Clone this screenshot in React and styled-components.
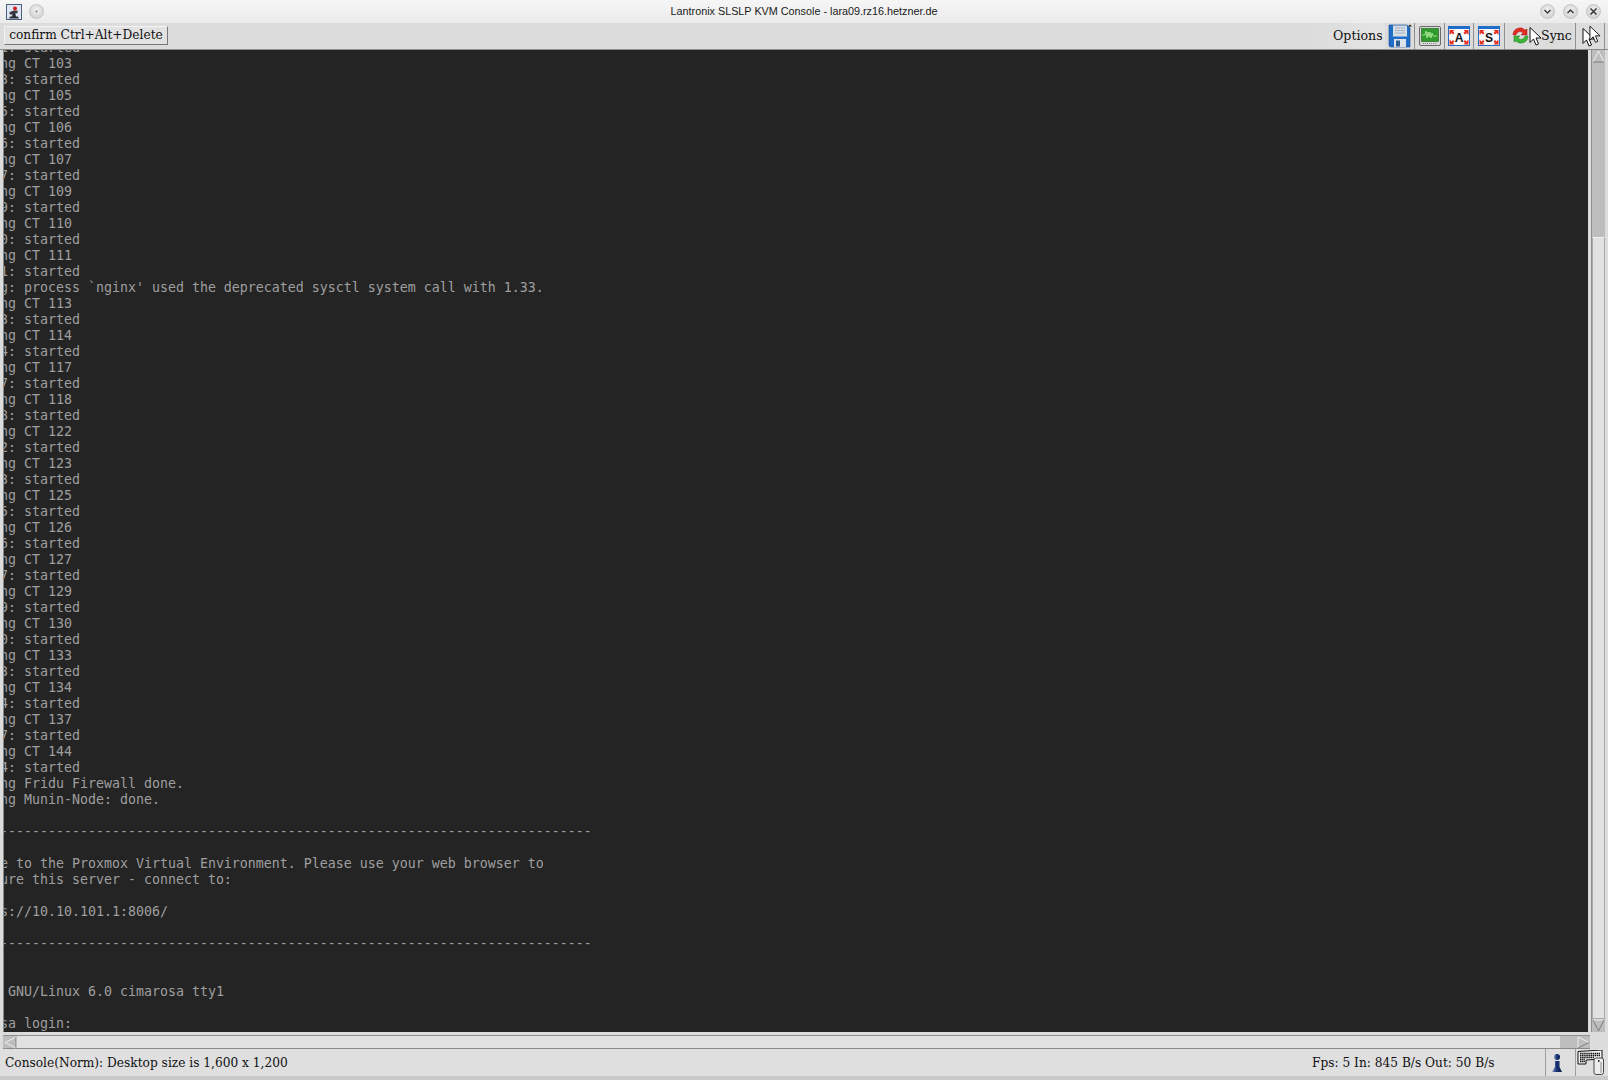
import React from 'react';
import styled, { createGlobalStyle } from 'styled-components';

const Global = createGlobalStyle`
  html, body { margin: 0; padding: 0; height: 1080px; overflow: hidden; background: #dcdcdc; }
  * { box-sizing: border-box; }
  svg { flex: none; display: block; }
`;

const Frame = styled.div`
  position: relative;
  width: 1608px;
  height: 1080px;
  overflow: hidden;
  display: flex;
  flex-direction: column;
  background: #dcdcdc;
`;

const TitleBar = styled.div`
  height: 23px;
  display: flex;
  align-items: center;
  padding: 0 7px 0 6px;
  background: linear-gradient(#f6f6f6, #ebebeb);
`;

const AppIcon = styled.div`
  width: 16px;
  height: 16px;
  margin-right: 7px;
  display: flex;
`;

const WinTitle = styled.div`
  flex: 1;
  text-align: center;
  padding-left: 24px;
  padding-bottom: 1px;
  font: 10.8px "Liberation Sans", Arial, sans-serif;
  color: #1a1a1a;
`;

const WinButtons = styled.div`
  display: flex;
  gap: 8px;
`;

const RoundBtn = styled.div`
  width: 15px;
  height: 15px;
  border-radius: 50%;
  background: radial-gradient(circle at 50% 40%, #f2f2f2, #c9c9c9);
  border: 1px solid #c4c4c4;
  display: flex;
  align-items: center;
  justify-content: center;
`;

const Toolbar = styled.div`
  height: 27px;
  display: flex;
  align-items: stretch;
  justify-content: space-between;
  padding: 0 3px 0 0;
  border-bottom: 1px solid #8a8a8a;
  background: #dcdcdc;
`;

const ConfirmButton = styled.button`
  margin: 3px 0 4px 4px;
  width: 164px;
  padding: 0 0 2px;
  white-space: nowrap;
  font: 12.2px "DejaVu Serif", serif;
  color: #111;
  background: #e2e2e2;
  border: 1px solid;
  border-color: #f4f4f4 #777 #777 #f4f4f4;
`;

const ToolGroup = styled.div`
  display: flex;
  align-items: stretch;
`;

const OptionsLabel = styled.div`
  width: 77px;
  padding: 0 0 2px 25px;
  display: flex;
  align-items: center;
  background: linear-gradient(90deg, #dcdcdc, #e4e4e4);
  font: 12.6px "DejaVu Serif", serif;
  color: #111;
`;

const Tool = styled.div`
  width: ${(props) => props.w}px;
  display: flex;
  align-items: center;
  justify-content: ${(props) => (props.text ? 'flex-start' : 'center')};
  padding: ${(props) => (props.text ? '0 0 2px 7px' : '0')};
  gap: 12px;
  border-right: 1px solid #8f8f8f;
  font: 12.6px "DejaVu Serif", serif;
  color: #111;
`;

const Work = styled.div`
  height: 982px;
  display: flex;
  padding-left: 3px;
`;

const Console = styled.div`
  flex: 1;
  overflow: hidden;
  background: #242424;
  border-left: 1px solid #8a8a8a;
`;

const Screen = styled.pre`
  margin: -10px 0 0 -4px;
  font-family: "DejaVu Sans Mono", monospace;
  font-size: 13.3px;
  line-height: 16px;
  letter-spacing: -0.01px;
  color: #9f9f9f;
`;

const VScroll = styled.div`
  width: 17px;
  margin-left: 3px;
  padding: 0 3px 0 0;
  display: flex;
  flex-direction: column;
  border-left: 1px solid #8f8f8f;
`;

const ArrowCell = styled.div`
  flex: none;
  width: ${(props) => props.w || 13}px;
  height: ${(props) => props.h || 13}px;
  display: flex;
  background: #bdbdbd;
`;

const VTrack = styled.div`
  height: 172px;
  background: #bdbdbd;
`;

const VThumb = styled.div`
  flex: 1;
  background: #e1e1e1;
  border: 1px solid #a9a9a9;
  border-top-color: #f2f2f2;
`;

const HScroll = styled.div`
  height: 14px;
  margin: 3px 18px 0 3px;
  display: flex;
  border-top: 1px solid #8f8f8f;
  border-bottom: 1px solid #8a8a8a;
`;

const HThumb = styled.div`
  flex: 1;
  background: #e1e1e1;
`;

const HTrack = styled.div`
  width: 17px;
  background: #bdbdbd;
`;

const Status = styled.div`
  height: 27px;
  display: flex;
  align-items: center;
  padding: 0 3px 0 5px;
  font: 12.2px "DejaVu Serif", serif;
  color: #111;
  background: #dfdfdf;
`;

const StatusLeft = styled.div`
  flex: 1;
`;

const StatusRate = styled.div`
  width: 233px;
`;

const StatusCell = styled.div`
  width: 30px;
  height: 100%;
  display: flex;
  align-items: center;
  justify-content: ${(props) => props.align || 'center'};
  padding-left: ${(props) => props.pad || 0}px;
  border-left: 1px solid #9d9d9d;
`;

const BottomStrip = styled.div`
  height: 4px;
  background: #c9c9c9;
`;

const Pointer = styled.svg`
  position: absolute;
  left: ${(props) => props.x}px;
  top: ${(props) => props.y}px;
`;

const JavaIcon = () => (
  <svg width="16" height="16" viewBox="0 0 16 16">
    <rect x="0.5" y="0.5" width="15" height="15" fill="#dfe6f2" stroke="#4c5f80" />
    <path d="M3 14.500h10l-1-2H4zM6 12.500l1-5h2l1 5z" fill="#2c2c34" />
    <path d="M3 9c2-2 5-3 9-2l-1 2.500c-2-.6-4 0-6 1.400z" fill="#3a3a44" />
    <circle cx="9" cy="4.500" r="2" fill="#d32020" />
  </svg>
);

const Chevron = ({ up }) => (
  <svg width="9" height="9" viewBox="0 0 9 9">
    <path d={up ? 'M1.500 6l3-3 3 3' : 'M1.500 3l3 3 3-3'} fill="none" stroke="#3c3c3c" strokeWidth="1.500" />
  </svg>
);

const CloseX = () => (
  <svg width="9" height="9" viewBox="0 0 9 9">
    <path d="M1.500 1.500l6 6M7.500 1.500l-6 6" fill="none" stroke="#3c3c3c" strokeWidth="1.600" />
  </svg>
);

const SaveIcon = () => (
  <svg width="24" height="24" viewBox="0 0 24 24">
    <path d="M1 1h18l3 3v19H3q-2 0-2-2z" fill="#1f6fc9" stroke="#10478f" strokeWidth=".6" />
    <rect x="5" y="1.500" width="14" height="11" fill="#d6dde6" />
    <path d="M7 4h10M7 6.500h10M7 9h10" stroke="#a9b4c2" strokeWidth="1" />
    <rect x="6" y="15" width="12" height="8" fill="#dfe4ea" />
    <rect x="8" y="16.500" width="4" height="6" fill="#2e5d94" />
    <path d="M20 2.500h4L22 .5z" fill="#111" />
  </svg>
);

const MonitorIcon = () => (
  <svg width="22" height="21" viewBox="0 0 22 21">
    <rect x=".5" y=".5" width="21" height="19" rx="1.500" fill="#d8d8d8" stroke="#6b6b6b" />
    <rect x="2.500" y="2.500" width="17" height="13" fill="#2f9b2a" stroke="#1f5e1e" strokeWidth=".6" />
    <path d="M3 9h3l1-4 1 7 1-6 1 5 1-5 1 6 1-5 1 3h4" fill="none" stroke="#b8f0a0" strokeWidth=".8" />
    <path d="M4 17.500h14" stroke="#8a8a8a" strokeWidth="1" strokeDasharray="1 1" />
  </svg>
);

const ScaleIcon = ({ letter }) => (
  <svg width="22" height="20" viewBox="0 0 22 20">
    <rect x=".5" y=".5" width="21" height="19" fill="#fafafa" stroke="#2a6cc0" />
    <rect x="0" y="0" width="22" height="3" fill="#1f6cc9" />
    <path
      d="M1.500 4h5L5 5.500 6.500 7 5 8.500 3.500 7 1.500 9zM20.500 4h-5L17 5.500 15.500 7 17 8.500 18.500 7l2 2zM1.500 18.500h5L5 17l1.500-1.500L5 14l-1.500 1.500-2-2zM20.500 18.500h-5L17 17l-1.500-1.500L17 14l1.500 1.500 2-2z"
      fill="#e53024"
    />
    <text
      x="11"
      y="15.500"
      textAnchor="middle"
      fontFamily="'Liberation Sans', sans-serif"
      fontWeight="700"
      fontSize="12"
      fill="#111"
    >
      {letter}
    </text>
  </svg>
);

const SyncIcon = () => (
  <svg width="17" height="17" viewBox="0 0 17 17">
    <path d="M1 8a7 7 0 0 1 12-5l2-1v6h-6l2-2a4 4 0 0 0-7 2z" fill="#e22a22" stroke="#9b1a14" strokeWidth=".5" />
    <path d="M16 9a7 7 0 0 1-12 5l-2 1v-6h6l-2 2a4 4 0 0 0 7-2z" fill="#3cb53a" stroke="#1d7a1c" strokeWidth=".5" />
  </svg>
);

const PointerPath = 'M1 1v15l3.500-3.500 2.500 6 2.500-1-2.500-6H12z';

const PersonIcon = () => (
  <svg width="10" height="18" viewBox="0 0 10 18">
    <defs>
      <linearGradient id="navy" x1="0" x2="1">
        <stop offset="0" stopColor="#8a9cc2" />
        <stop offset=".45" stopColor="#1a3579" />
        <stop offset="1" stopColor="#0a1a4a" />
      </linearGradient>
    </defs>
    <circle cx="5" cy="3" r="3" fill="url(#navy)" />
    <path d="M3 7h4.500v6l2.500 5H0l3-5z" fill="url(#navy)" />
  </svg>
);

const KeyboardIcon = () => (
  <svg width="27" height="25" viewBox="0 0 27 25">
    <path d="M1 1.500L25 0v9L9 10v4H1z" fill="#f4f4f4" stroke="#111" strokeWidth="1" />
    <path d="M3 3.500h20M3 5.500h20M3 7.500h14M3 9.500h5M3 11.500h5" stroke="#111" strokeDasharray="1.500 .6" strokeWidth="1.300" />
    <rect x="17" y="8" width="9.500" height="16.500" rx="2" fill="#ededed" stroke="#333" strokeWidth=".9" />
    <rect x="21" y="10" width="1.500" height="2" fill="#333" />
    <path d="M24 12v11" stroke="#bbb" strokeWidth="2" />
  </svg>
);

const ScrollArrow = ({ dir }) => {
  const shapes = {
    up: ['M1 12L6.500 1 12 12', 'M1 12h11'],
    down: ['M1 1h11', 'M1 1l5.500 11L12 1'],
    left: ['M13 1L2 6.500 13 12', 'M13 1v11'],
    right: ['M1 12V1l11 5.500', 'M1 12l11-5.500'],
  };
  const [light, dark] = shapes[dir];
  return (
    <svg width="13" height="13" viewBox="0 0 13 13">
      <path d={light} fill="none" stroke="#efefef" />
      <path d={dark} fill="none" stroke="#7d7d7d" />
    </svg>
  );
};

const started = (ids) =>
  ids.flatMap((id) => [`ng CT ${id}`, `${String(id).slice(-1)}: started`]);

const dashes = '-'.repeat(74);

const lines = [
  '1: started',
  ...started([103, 105, 106, 107, 109, 110, 111]),
  "g: process `nginx' used the deprecated sysctl system call with 1.33.",
  ...started([113, 114, 117, 118, 122, 123, 125, 126, 127, 129, 130, 133, 134, 137, 144]),
  'ng Fridu Firewall done.',
  'ng Munin-Node: done.',
  '',
  dashes,
  '',
  'e to the Proxmox Virtual Environment. Please use your web browser to',
  'ure this server - connect to:',
  '',
  's://10.10.101.1:8006/',
  '',
  dashes,
  '',
  '',
  ' GNU/Linux 6.0 cimarosa tty1',
  '',
  'sa login:',
];

const App = () => (
  <Frame>
    <Global />
    <TitleBar>
      <AppIcon>
        <JavaIcon />
      </AppIcon>
      <RoundBtn>
        <svg width="3" height="3"><circle cx="1.500" cy="1.500" r="1" fill="#777" /></svg>
      </RoundBtn>
      <WinTitle>Lantronix SLSLP KVM Console - lara09.rz16.hetzner.de</WinTitle>
      <WinButtons>
        <RoundBtn><Chevron /></RoundBtn>
        <RoundBtn><Chevron up /></RoundBtn>
        <RoundBtn><CloseX /></RoundBtn>
      </WinButtons>
    </TitleBar>

    <Toolbar>
      <ConfirmButton>confirm Ctrl+Alt+Delete</ConfirmButton>
      <ToolGroup>
        <OptionsLabel>Options</OptionsLabel>
        <Tool w={30}><SaveIcon /></Tool>
        <Tool w={30}><MonitorIcon /></Tool>
        <Tool w={29}><ScaleIcon letter="A" /></Tool>
        <Tool w={31}><ScaleIcon letter="S" /></Tool>
        <Tool w={71} text>
          <SyncIcon />
          <span>Sync</span>
        </Tool>
        <Tool w={29} />
      </ToolGroup>
    </Toolbar>

    <Work>
      <Console>
        <Screen>{lines.join('\n')}</Screen>
      </Console>
      <VScroll>
        <ArrowCell h={15}><ScrollArrow dir="up" /></ArrowCell>
        <VTrack />
        <VThumb />
        <ArrowCell h={13}><ScrollArrow dir="down" /></ArrowCell>
      </VScroll>
    </Work>

    <HScroll>
      <ArrowCell w={14} h={12}><ScrollArrow dir="left" /></ArrowCell>
      <HThumb />
      <HTrack />
      <ArrowCell w={13} h={12}><ScrollArrow dir="right" /></ArrowCell>
    </HScroll>

    <Status>
      <StatusLeft>Console(Norm): Desktop size is 1,600 x 1,200</StatusLeft>
      <StatusRate>Fps: 5 In: 845 B/s Out: 50 B/s</StatusRate>
      <StatusCell align="flex-start" pad={6}><PersonIcon /></StatusCell>
      <StatusCell><KeyboardIcon /></StatusCell>
    </Status>
    <BottomStrip />

    {/* the captured mouse pointers sit over the toolbar */}
    <Pointer x={1529} y={26} width="13" height="21" viewBox="0 0 13 20">
      <path d={PointerPath} fill="#fff" stroke="#111" />
    </Pointer>
    <Pointer x={1582} y={27} width="13" height="21" viewBox="0 0 13 20">
      <path d={PointerPath} fill="#fff" stroke="#111" />
    </Pointer>
    <Pointer x={1589} y={25} width="12" height="19" viewBox="0 0 13 20">
      <path d={PointerPath} fill="#fff" stroke="#111" />
    </Pointer>
  </Frame>
);

export default App;
